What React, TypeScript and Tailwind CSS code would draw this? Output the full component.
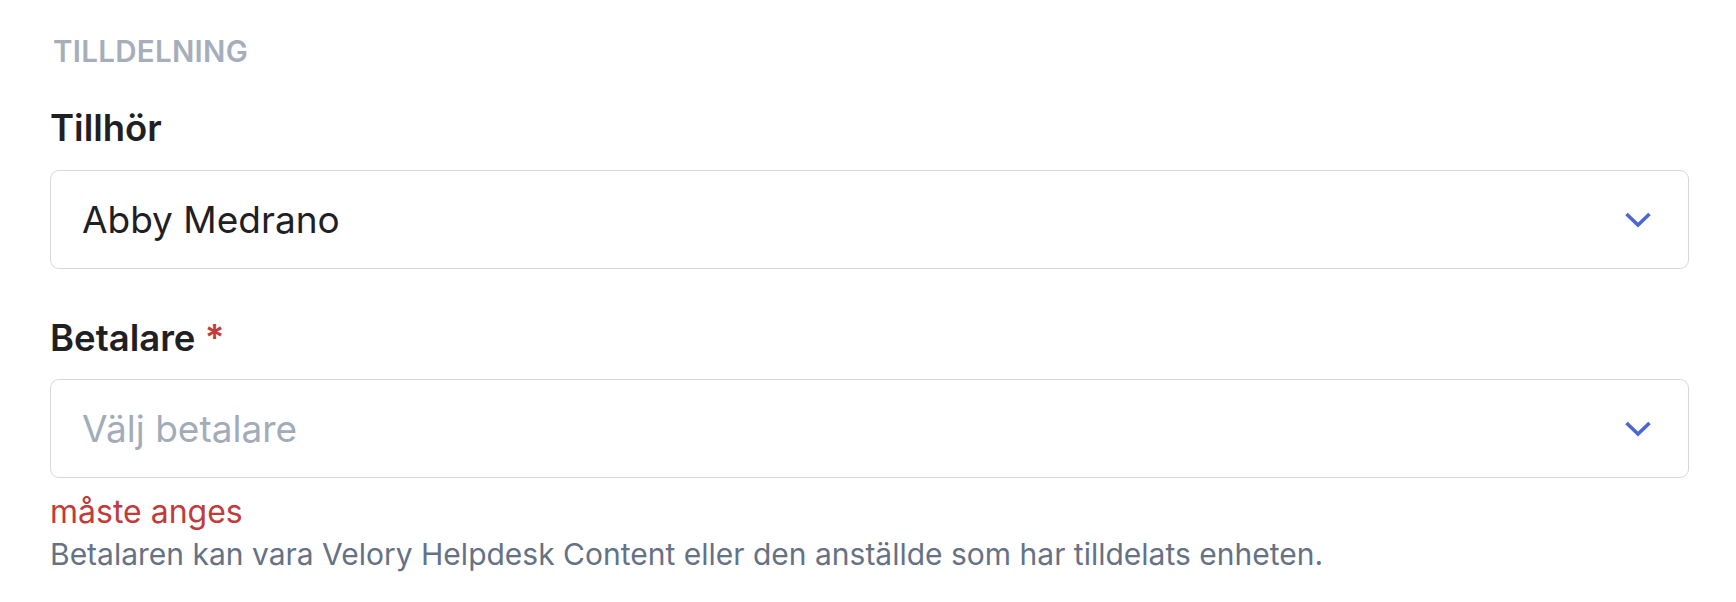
import React from "react";

function Chevron() {
  return (
    <svg width="28" height="17" viewBox="0 0 28 17" fill="none" className="shrink-0">
      <polyline points="2.5,3 14,14 25.5,3" stroke="#4a67d6" strokeWidth="3.6" strokeLinecap="butt" strokeLinejoin="miter" />
    </svg>
  );
}

function Select({ value, placeholder }: { value?: string; placeholder?: string }) {
  return (
    <div className="flex h-[99px] w-full items-center justify-between rounded-[9px] border-[1.5px] border-[#d4d9e0] bg-white pl-[31px] pr-[36px]">
      {value ? (
        <span className="text-[37px] leading-[46px] text-[#1f2023]">{value}</span>
      ) : (
        <span className="text-[37px] leading-[46px] text-[#a2acb9]">{placeholder}</span>
      )}
      <Chevron />
    </div>
  );
}

export default function App() {
  return (
    <div
      className="min-h-[602px] w-full bg-white pl-[50px] pr-[47px] pt-[33px]"
      style={{ fontFamily: "Inter, 'Noto Sans', sans-serif" }}
    >
      <div className="text-[29.5px] font-semibold uppercase leading-[36px] tracking-[0.01em] text-[#a7aebb] pl-[3px]">
        Tilldelning
      </div>

      <div className="mt-[37px] flex flex-col">
        <label className="text-[36.5px] font-semibold leading-[44px] text-[#1f2023]">Tillhör</label>
        <div className="mt-[20px]">
          <Select value="Abby Medrano" />
        </div>
      </div>

      <div className="mt-[47px] flex flex-col">
        <label className="text-[36.5px] font-semibold leading-[44px] text-[#1f2023]">
          Betalare <span className="text-[#c23b3b]">*</span>
        </label>
        <div className="mt-[19px]">
          <Select placeholder="Välj betalare" />
        </div>
        <div className="mt-[14px] text-[32px] leading-[40px] text-[#c23b3b]">måste anges</div>
        <div className="mt-[2px] text-[30px] leading-[40px] text-[#657285]">
          Betalaren kan vara Velory Helpdesk Content eller den anställde som har tilldelats enheten.
        </div>
      </div>
    </div>
  );
}
